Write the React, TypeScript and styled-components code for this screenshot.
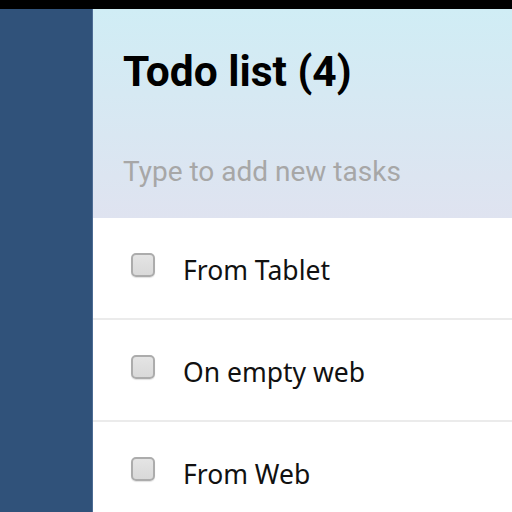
import React from "react";
import styled, { createGlobalStyle } from "styled-components";

const Global = createGlobalStyle`
  html, body { margin: 0; padding: 0; width: 512px; height: 512px; overflow: hidden; background: #ffffff; }
  #root { height: 512px; }
`;

const Screen = styled.div`
  display: flex;
  flex-direction: column;
  width: 512px;
  height: 512px;
`;

const StatusBar = styled.div`
  height: 9px;
  background: #000000;
  flex: none;
`;

const Body = styled.div`
  display: flex;
  flex: 1;
  min-height: 0;
`;

const Sidebar = styled.div`
  width: 92px;
  flex: none;
  background: #30527a;
  border-right: 1px solid #4d6c94;
`;

const Main = styled.div`
  flex: 1;
  display: flex;
  flex-direction: column;
  overflow: hidden;
`;

const Header = styled.div`
  height: 209px;
  flex: none;
  background: linear-gradient(180deg, #d0edf5 0%, #dfe3f0 100%);
  display: flex;
  flex-direction: column;
  padding-left: 30px;
  box-sizing: border-box;
`;

const Title = styled.h1`
  margin: 0;
  height: 125px;
  display: flex;
  align-items: center;
  font-family: Roboto, "Liberation Sans", sans-serif;
  font-weight: 700;
  font-size: 42.5px;
  color: #000000;
`;

const NewTask = styled.input`
  border: none;
  background: transparent;
  outline: none;
  padding: 0;
  margin: 20px 0 0 0;
  height: 34px;
  font-family: Roboto, "Liberation Sans", sans-serif;
  font-size: 28px;
  color: #222;
  &::placeholder { color: #a7a7a7; }
`;

const List = styled.div`
  display: flex;
  flex-direction: column;
`;

const Row = styled.div`
  height: 100px;
  flex: none;
  display: flex;
  align-items: center;
  padding-left: 38px;
  border-bottom: 2px solid #ebebeb;
  background: #ffffff;
`;

const Check = styled.span`
  width: 24px;
  height: 24px;
  box-sizing: border-box;
  border: 2px solid #acacac;
  border-radius: 5px;
  background: linear-gradient(180deg, #e4e4e4 0%, #d9d9d9 100%);
  box-shadow: 0 1px 1px rgba(0, 0, 0, 0.12);
  margin-top: -6px;
  flex: none;
`;

const Label = styled.span`
  margin-left: 28px;
  margin-top: 4px;
  font-family: "Noto Sans", "Open Sans", sans-serif;
  font-size: 26.5px;
  color: #111111;
`;

const tasks = ["From Tablet", "On empty web", "From Web"];

export default function App() {
  return (
    <>
      <Global />
      <Screen>
        <StatusBar />
        <Body>
          <Sidebar />
          <Main>
            <Header>
              <Title>Todo list (4)</Title>
              <NewTask placeholder="Type to add new tasks" />
            </Header>
            <List>
              {tasks.map((t) => (
                <Row key={t}>
                  <Check />
                  <Label>{t}</Label>
                </Row>
              ))}
            </List>
          </Main>
        </Body>
      </Screen>
    </>
  );
}
